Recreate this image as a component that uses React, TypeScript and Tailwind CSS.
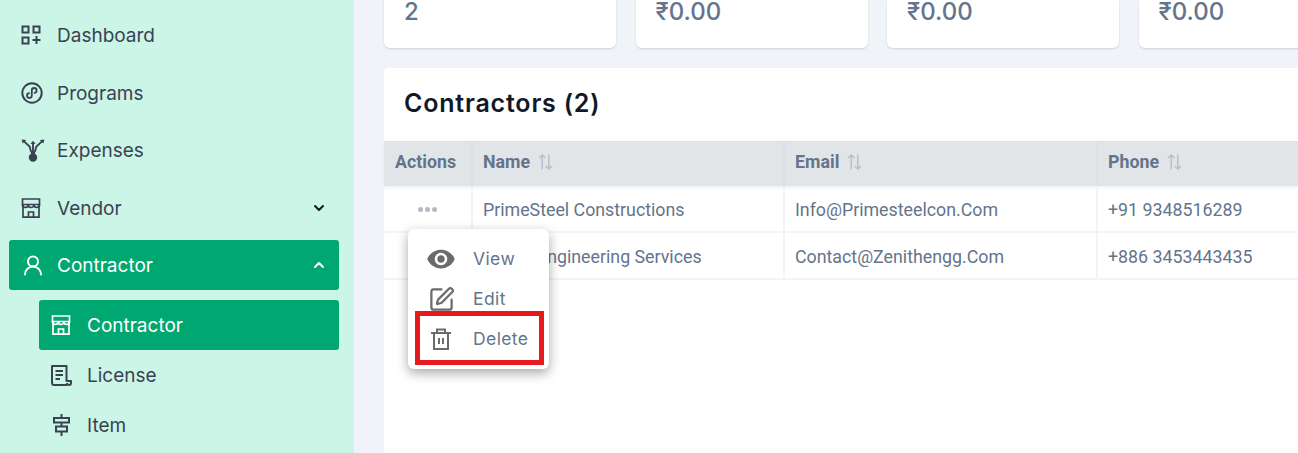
import { ChevronDown, ChevronUp, SquarePen, UserRound } from 'lucide-react'
import { MdRemoveRedEye } from 'react-icons/md'

const heading = { fontFamily: '"Inter", "Noto Sans", sans-serif' }

function DashboardIcon() {
  return (
    <svg viewBox="0 0 20 20" fill="none" stroke="currentColor" strokeWidth="2" className="h-[20px] w-[20px]">
      <rect x="1.5" y="1.5" width="6" height="6" />
      <rect x="12.5" y="1.5" width="6" height="6" />
      <rect x="1.5" y="12.5" width="6" height="6" />
      <path d="M15.5 11v8M11.5 15h8" />
    </svg>
  )
}

function ProgramsIcon() {
  return (
    <svg viewBox="0 0 22 22" fill="none" stroke="currentColor" className="h-[22px] w-[22px]">
      <circle cx="11" cy="11" r="9.7" strokeWidth="2" />
      <path d="M8.7 11.2h-.3a2.4 2.4 0 1 0 2.4 2.4V8.4a2.4 2.4 0 1 1 2.4 2.4h-.3" strokeWidth="1.8" />
    </svg>
  )
}

function ExpensesIcon() {
  return (
    <svg viewBox="0 0 24 24" fill="none" stroke="currentColor" className="h-[24px] w-[24px]">
      <circle cx="12" cy="19.5" r="4.2" fill="currentColor" stroke="none" />
      <path d="M9.8 14h4.4l-.5 2.2h-3.4z" fill="currentColor" stroke="none" />
      <path d="M12 14V4" strokeWidth="1.9" />
      <path d="M9.5 6 12 2.8 14.5 6z" fill="currentColor" stroke="none" />
      <path d="M10.2 14 8.6 8.5 3 3.4" strokeWidth="1.9" />
      <path d="M.6 1.4 5.2 2 1.6 5.6z" fill="currentColor" stroke="none" />
      <path d="M13.8 14 15.4 8.5 21 3.4" strokeWidth="1.9" />
      <path d="M23.4 1.4 18.8 2 22.4 5.6z" fill="currentColor" stroke="none" />
    </svg>
  )
}

function StoreIcon() {
  return (
    <svg viewBox="0 0 20 20" fill="none" stroke="currentColor" strokeWidth="1.7" className="h-[20px] w-[20px]">
      <path d="M1.5 1h17v5.5h-17z" />
      <path d="M2 6.5v12.6h16V6.5" />
      <path d="M1.5 6.5c0 4 5.7 4 5.7 0 0 4 5.6 4 5.6 0 0 4 5.7 4 5.7 0" />
      <path d="M7.5 19v-5h5v5" />
    </svg>
  )
}

function LicenseIcon() {
  return (
    <svg viewBox="0 0 21 21" fill="none" stroke="currentColor" strokeWidth="2" strokeLinejoin="round" className="h-[21px] w-[21px]">
      <path d="M16 20H3a2 2 0 0 1-2-2V1h14.5v15.5" />
      <path d="M15.5 16H20v2a2 2 0 0 1-4 0" />
      <path d="M4.5 6h7.5M4.5 10h7.5M4.5 14h4.5" strokeWidth="1.8" />
    </svg>
  )
}

function ItemIcon() {
  return (
    <svg viewBox="0 0 17 22" fill="none" stroke="currentColor" strokeWidth="2" className="ml-[2px] h-[22px] w-[17px]">
      <path d="M8.5 0v4M8.5 8.5v4M8.5 17.5v4.5" />
      <rect x="1" y="4" width="15" height="4.5" />
      <rect x="3" y="12.5" width="11" height="5" />
    </svg>
  )
}

function TrashIcon() {
  return (
    <svg viewBox="0 0 20 22" fill="none" stroke="currentColor" strokeWidth="2" className="h-[22px] w-[20px] text-[#6b6b6b]">
      <path d="M0 5h20" />
      <path d="M6 5V1.5h8V5" />
      <path d="M3 5v16h14V5" />
      <path d="M8 10v6M12 10v6" />
    </svg>
  )
}

function SortIcon() {
  return (
    <svg viewBox="0 0 16 18" fill="none" stroke="currentColor" strokeWidth="1.6" className="h-[18px] w-[15px] text-[#b9bfc9]">
      <path d="M4.5 17V1.5M1.2 4.8l3.3-3.3 3.3 3.3" />
      <path d="M11.5 1v15.5M8.2 13.2l3.3 3.3 3.3-3.3" />
    </svg>
  )
}

function NavItem({ icon, label, chevron, active }: { icon: React.ReactNode; label: string; chevron?: 'up' | 'down'; active?: boolean }) {
  return (
    <div className={`flex h-[50px] shrink-0 items-center rounded-[3px] px-[12px] ${active ? 'bg-[#00a771] text-white' : 'text-[#3a4252]'}`}>
      <span className="flex w-[36px] shrink-0">{icon}</span>
      <span className="flex-1 pt-[3px] text-[19px]" style={heading}>{label}</span>
      {chevron === 'down' && <ChevronDown className="h-[16px] w-[16px] text-[#111827]" strokeWidth={3} />}
      {chevron === 'up' && <ChevronUp className="h-[16px] w-[16px] text-white" strokeWidth={3} />}
    </div>
  )
}

function SubItem({ icon, label, active }: { icon: React.ReactNode; label: string; active?: boolean }) {
  return (
    <div className={`flex h-[50px] items-center rounded-[3px] pl-[12px] ${active ? 'bg-[#00a771] text-white' : 'text-[#3a4252]'}`}>
      <span className="flex w-[36px] shrink-0">{icon}</span>
      <span className="pt-[3px] text-[19px]" style={heading}>{label}</span>
    </div>
  )
}

function StatCard({ value }: { value: string }) {
  return (
    <div className="flex h-[48px] w-[232px] shrink-0 items-start rounded-b-[6px] bg-white pl-[20px] shadow-[0_1px_2px_rgba(15,23,42,0.15)]">
      <span className="-mt-[2px] text-[24px] font-medium leading-[28px] text-[#64748b]" style={heading}>{value}</span>
    </div>
  )
}

const rows = [
  { name: 'PrimeSteel Constructions', email: 'Info@Primesteelcon.Com', phone: '+91 9348516289' },
  { name: 'Zenith Engineering Services', email: 'Contact@Zenithengg.Com', phone: '+886 3453443435' },
]

const cols = 'grid grid-cols-[89px_312px_313px_1fr]'

export default function App() {
  return (
    <div className="flex h-[453px] w-[1298px] overflow-hidden bg-[#f0f3f8]" style={{ fontFamily: '"Roboto", sans-serif' }}>
      {/* Sidebar */}
      <aside className="flex w-[354px] shrink-0 flex-col gap-[7.5px] bg-[#cbf5e6] pl-[9px] pr-[15px] pt-[10px]">
        <NavItem icon={<DashboardIcon />} label="Dashboard" />
        <NavItem icon={<ProgramsIcon />} label="Programs" />
        <NavItem icon={<ExpensesIcon />} label="Expenses" />
        <NavItem icon={<StoreIcon />} label="Vendor" chevron="down" />
        <NavItem icon={<UserRound className="h-[27px] w-[24px]" strokeWidth={2} />} label="Contractor" chevron="up" active />
        <div className="ml-[30px] mt-[2.5px]">
          <SubItem icon={<StoreIcon />} label="Contractor" active />
          <SubItem icon={<LicenseIcon />} label="License" />
          <SubItem icon={<ItemIcon />} label="Item" />
        </div>
      </aside>

      {/* Main */}
      <main className="relative min-w-0 flex-1 pl-[30px]">
        <div className="flex gap-[19.5px]">
          <StatCard value="2" />
          <StatCard value="₹0.00" />
          <StatCard value="₹0.00" />
          <StatCard value="₹0.00" />
        </div>

        <section className="mt-[20px] h-[400px] rounded-tl-[4px] bg-white">
          <h1 className="flex h-[73px] items-center pb-[2px] pl-[20px] text-[25px] font-semibold tracking-[0.8px] text-[#111827]" style={heading}>Contractors (2)</h1>
          <div className={`${cols} h-[45px] items-stretch border-t border-[#dcdfe3] bg-[#e2e5e8] text-[17.8px] font-bold text-[#64748b] shadow-[0_2px_3px_rgba(15,23,42,0.06)]`}>
            <div className="flex items-center justify-center border-r-2 border-[#dcdfe3] pb-[4px] pr-[4px]">Actions</div>
            <div className="flex items-center gap-[8px] border-r-2 border-[#dcdfe3] pb-[4px] pl-[10px]">Name <SortIcon /></div>
            <div className="flex items-center gap-[8px] border-r-2 border-[#dcdfe3] pb-[4px] pl-[10px]">Email <SortIcon /></div>
            <div className="flex items-center gap-[8px] pb-[4px] pl-[10px]">Phone <SortIcon /></div>
          </div>
          {rows.map((row) => (
            <div key={row.phone} className={`${cols} h-[46.75px] border-b-2 border-[#f3f4f6] text-[17.8px] text-[#64748b]`}>
              <div className="flex items-center justify-center gap-[2px] border-r-2 border-[#f3f4f6] pt-[2px]">
                <span className="h-[5px] w-[5px] rounded-full bg-[#b4bac2]" />
                <span className="h-[5px] w-[5px] rounded-full bg-[#b4bac2]" />
                <span className="h-[5px] w-[5px] rounded-full bg-[#b4bac2]" />
              </div>
              <div className="flex items-center border-r-2 border-[#f3f4f6] pl-[10px] pt-[4px]">{row.name}</div>
              <div className="flex items-center border-r-2 border-[#f3f4f6] pl-[10px] pt-[4px]">{row.email}</div>
              <div className="flex items-center pl-[10px] pt-[4px]">{row.phone}</div>
            </div>
          ))}
        </section>

        {/* Row actions menu */}
        <div className="absolute left-[54px] top-[229px] w-[141px] rounded-[6px] bg-white pt-[10px] text-[17.5px] tracking-[0.4px] text-[#64748b] shadow-[0_4px_12px_rgba(0,0,0,0.35)]" style={heading}>
          <div className="flex h-[40px] items-center pl-[20px]">
            <MdRemoveRedEye size={30} className="-ml-[2px] mr-[17px] text-[#6b6b6b]" />View
          </div>
          <div className="flex h-[40px] items-center pl-[20px]">
            <SquarePen className="mr-[18px] h-[27px] w-[27px] text-[#6b6b6b]" strokeWidth={2} />Edit
          </div>
          <div className="flex h-[40px] items-center pl-[23px]">
            <TrashIcon />
            <span className="ml-[22px]">Delete</span>
          </div>
          <div className="h-[10px]" />
          <div className="absolute left-[7px] top-[82px] h-[54px] w-[129px] border-[5px] border-[#e8191c]" />
        </div>
      </main>
    </div>
  )
}
